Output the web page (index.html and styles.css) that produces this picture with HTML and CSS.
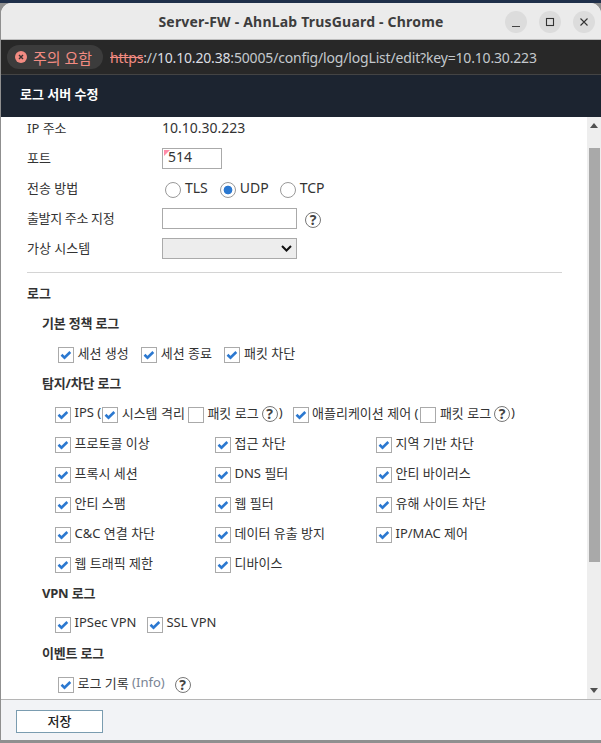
FILE: index.html
```html
<!DOCTYPE html>
<html lang="ko">
<head>
<meta charset="utf-8">
<title>Server-FW - AhnLab TrusGuard - Chrome</title>
<link rel="stylesheet" href="styles.css">
</head>
<body>
<svg class="defs" width="0" height="0" aria-hidden="true">
  <symbol id="tick" viewBox="0 0 14 14"><path d="M2.500 6.800l3 2.900 5.800-5.700" fill="none" stroke="#2b78d0" stroke-width="2.600"/></symbol>
</svg>
<div class="window">
  <div class="titlebar">
    <span class="title">Server-FW - AhnLab TrusGuard - Chrome</span>
    <div class="winbtns">
      <span class="winbtn"><svg width="22" height="22" viewBox="0 0 22 22"><path d="M7 15.500h8" stroke="#444" stroke-width="1.200"/></svg></span>
      <span class="winbtn"><svg width="22" height="22" viewBox="0 0 22 22"><rect x="7.500" y="7.500" width="7" height="7" fill="none" stroke="#333" stroke-width="1.100"/></svg></span>
      <span class="winbtn"><svg width="22" height="22" viewBox="0 0 22 22"><path d="M7.500 7.500l7 7M14.500 7.500l-7 7" stroke="#333" stroke-width="1.100"/></svg></span>
    </div>
  </div>
  <div class="addressbar">
    <span class="chip">
      <svg width="12" height="12" viewBox="0 0 12 12"><circle cx="6" cy="6" r="6" fill="#f28b82"/><path d="M4 4l4 4M8 4l-4 4" stroke="#3a3030" stroke-width="1.400"/></svg>
      <span>주의 요함</span>
    </span>
    <span class="url"><s class="https">https</s><span class="dim">://</span>10.10.20.38<span class="dim">:50005/config/log/logList/edit?key=10.10.30.223</span></span>
  </div>
  <div class="header">로그 서버 수정</div>
  <div class="middle">
    <div class="content">
      <div class="scrolled">
        <div class="row form"><span class="lab">IP 주소</span><span class="value">10.10.30.223</span></div>
        <div class="row form"><span class="lab">포트</span><span class="input small">514</span></div>
        <div class="row form"><span class="lab">전송 방법</span>
          <span class="radios">
            <span class="opt"><i class="radio"></i>TLS</span>
            <span class="opt"><i class="radio on"></i>UDP</span>
            <span class="opt"><i class="radio"></i>TCP</span>
          </span>
        </div>
        <div class="row form"><span class="lab condensed">출발지 주소 지정</span><span class="input wide"></span><span class="help spaced">?</span></div>
        <div class="row form"><span class="lab">가상 시스템</span>
          <span class="select"><svg width="11" height="7" viewBox="0 0 11 7"><path d="M1 1l4.500 4.500L10 1" fill="none" stroke="#111" stroke-width="2"/></svg></span>
        </div>
        <hr class="divider">
        <div class="row h1">로그</div>
        <div class="row h2">기본 정책 로그</div>
        <div class="row checks c1">
          <label class="cb"><span class="box"><svg><use href="#tick"/></svg></span>세션 생성</label>
          <label class="cb"><span class="box"><svg><use href="#tick"/></svg></span>세션 종료</label>
          <label class="cb"><span class="box"><svg><use href="#tick"/></svg></span>패킷 차단</label>
        </div>
        <div class="row h2">탐지/차단 로그</div>
        <div class="row checks c2 tight">
          <label class="cb ips"><span class="box"><svg><use href="#tick"/></svg></span>IPS (</label>
          <label class="cb"><span class="box"><svg><use href="#tick"/></svg></span>시스템 격리</label>
          <label class="cb"><span class="box"></span>패킷 로그</label><span class="help inline">?</span><span class="paren">)</span>
          <label class="cb gap"><span class="box"><svg><use href="#tick"/></svg></span>애플리케이션 제어 (</label>
          <label class="cb"><span class="box"></span>패킷 로그</label><span class="help inline">?</span><span class="paren">)</span>
        </div>
        <div class="grid3">
          <label class="cb"><span class="box"><svg><use href="#tick"/></svg></span>프로토콜 이상</label>
          <label class="cb"><span class="box"><svg><use href="#tick"/></svg></span>접근 차단</label>
          <label class="cb"><span class="box"><svg><use href="#tick"/></svg></span>지역 기반 차단</label>
          <label class="cb"><span class="box"><svg><use href="#tick"/></svg></span>프록시 세션</label>
          <label class="cb"><span class="box"><svg><use href="#tick"/></svg></span>DNS 필터</label>
          <label class="cb"><span class="box"><svg><use href="#tick"/></svg></span>안티 바이러스</label>
          <label class="cb"><span class="box"><svg><use href="#tick"/></svg></span>안티 스팸</label>
          <label class="cb"><span class="box"><svg><use href="#tick"/></svg></span>웹 필터</label>
          <label class="cb"><span class="box"><svg><use href="#tick"/></svg></span>유해 사이트 차단</label>
          <label class="cb"><span class="box"><svg><use href="#tick"/></svg></span>C&amp;C 연결 차단</label>
          <label class="cb"><span class="box"><svg><use href="#tick"/></svg></span>데이터 유출 방지</label>
          <label class="cb"><span class="box"><svg><use href="#tick"/></svg></span>IP/MAC 제어</label>
          <label class="cb"><span class="box"><svg><use href="#tick"/></svg></span>웹 트래픽 제한</label>
          <label class="cb"><span class="box"><svg><use href="#tick"/></svg></span>디바이스</label>
        </div>
        <div class="row h2">VPN 로그</div>
        <div class="row checks c2 vpn">
          <label class="cb"><span class="box"><svg><use href="#tick"/></svg></span>IPSec VPN</label>
          <label class="cb"><span class="box"><svg><use href="#tick"/></svg></span>SSL VPN</label>
        </div>
        <div class="row h2">이벤트 로그</div>
        <div class="row checks c1 event">
          <label class="cb"><span class="box"><svg><use href="#tick"/></svg></span>로그 기록 <span class="muted">(Info)</span></label>
          <span class="help">?</span>
        </div>
      </div>
    </div>
    <div class="scrollbar">
      <svg class="arrow" width="8" height="5" viewBox="0 0 8 5"><path d="M4 0L8 5H0z" fill="#505050"/></svg>
      <div class="track"><div class="thumb"></div></div>
      <svg class="arrow" width="8" height="5" viewBox="0 0 8 5"><path d="M4 5L8 0H0z" fill="#505050"/></svg>
    </div>
  </div>
  <div class="footer"><button class="save" type="button">저장</button></div>
</div>
</body>
</html>
```
FILE: styles.css
```css
* { box-sizing: border-box; }
html, body { margin: 0; height: 100%; }
body {
  width: 601px; height: 743px; overflow: hidden;
  background: linear-gradient(#1f2f4a 3px, #8f8f8f 3px);
  padding: 3px 0 3px 1px;
  font-family: "Noto Sans", "Noto Sans CJK KR", sans-serif;
  font-size: 13px; color: #333;
}
.defs { position: absolute; }
.window {
  width: 600px; height: 737px;
  display: flex; flex-direction: column;
  border-radius: 11px 11px 0 0;
  overflow: hidden;
  background: #fff;
}
.titlebar {
  height: 37px; flex: none;
  background: #ebebeb;
  border-bottom: 1px solid #bdbdbd;
  display: flex; align-items: center; justify-content: center;
  position: relative;
}
.title { font-family: "Noto Sans", sans-serif; font-weight: 700; font-size: 14px; letter-spacing: 0.2px; color: #3d3d3d; }
.winbtns { position: absolute; right: 6px; top: 8px; display: flex; gap: 12px; }
.winbtn { width: 22px; height: 22px; border-radius: 50%; background: #dcdcdc; display: flex; align-items: center; justify-content: center; }
.addressbar {
  height: 35px; flex: none;
  background: #282828;
  border-bottom: 1px solid #444;
  display: flex; align-items: center;
  padding-left: 6px; gap: 7px;
}
.chip {
  height: 24px; width: 96px; flex: none;
  background: #3c3c3c; border-radius: 12px;
  display: flex; align-items: center; gap: 6px;
  padding-left: 8px;
  color: #f28b82; font-size: 15px;
}
.url { font-size: 14px; letter-spacing: -0.17px; color: #dcdee2; white-space: nowrap; }
.https { color: #f28b82; }
.dim { color: #c4c8cd; }
.header {
  height: 42px; flex: none;
  background: #1c2430;
  color: #fff; font-weight: 700; font-size: 13px;
  display: flex; align-items: center;
  padding: 0 0 6px 19px;
}
.middle { flex: 1; min-height: 0; display: flex; }
.content { flex: 1; min-width: 0; overflow: hidden; }
.scrolled { margin-top: -5px; padding: 0 25px 0 26px; }
.row { height: 30px; display: flex; align-items: center; }
.lab { width: 135px; flex: none; }
.condensed { letter-spacing: -0.35px; }
.value { font-size: 14px; }
.input { display: block; height: 21px; margin-top: 3px; background: #fff; border: 1px solid #aaa; padding-left: 5px; line-height: 16px; position: relative; }
.small { width: 60px; font-size: 14px; }
.small::before { content: ""; position: absolute; left: 1px; top: 1px; border-top: 6px solid #ff8ba8; border-right: 6px solid transparent; }
.wide { width: 135px; }
.select { width: 135px; height: 21px; margin-top: 3px; background: #ededed; border: 1px solid #aaa; display: flex; align-items: center; justify-content: flex-end; padding-right: 4px; }
.radios { display: flex; padding-left: 3px; font-size: 14px; }
.opt { display: flex; align-items: center; gap: 4px; margin-right: 12px; }
.opt:nth-child(2) { margin-right: 11px; }
.radio { width: 16px; height: 16px; margin-top: 6px; border: 1px solid #999; border-radius: 50%; background: #fff; display: block; }
.radio.on { background: radial-gradient(circle, #2b78d0 0 4px, #fff 4.700px); }
.help {
  width: 16px; height: 16px; flex: none;
  margin-top: 6px;
  border: 1.500px solid #777; border-radius: 50%;
  display: inline-flex; align-items: center; justify-content: center;
  font-size: 14px; font-weight: 700; color: #444; line-height: 1;
}
.help.inline { margin-top: 4px; }
.help.spaced { margin-left: 8px; }
.divider { margin: 10px 0 4px; border: 0; border-top: 1px solid #d4d4d4; height: 1px; width: 535px; }
.h1 { font-weight: 700; }
.h2 { font-weight: 700; padding-left: 15px; letter-spacing: -0.2px; }
.checks { gap: 12.500px; }
.c1 { padding-left: 31px; }
.c2 { padding-left: 28px; }
.tight { gap: 3px; }
.vpn { gap: 10.500px; }
.event { gap: 10px; }
.cb { display: inline-flex; align-items: center; gap: 3.500px; white-space: pre; }
.ips { margin-right: -2px; }
.gap { margin: 0 -1px 0 7px; }
.box { width: 16px; height: 16px; margin-top: 6px; flex: none; background: #fff; border: 1px solid #aaa; display: block; }
.box svg { display: block; width: 14px; height: 14px; }
.paren { margin-left: -2px; }
.muted { color: #7a8494; margin-left: -3.500px; }
.grid3 { display: grid; grid-template-columns: 160px 161px 1fr; grid-auto-rows: 30px; align-items: center; padding-left: 28px; }
.scrollbar { width: 14px; flex: none; background: #eee; display: flex; flex-direction: column; align-items: center; padding-top: 6px; padding-bottom: 6px; }
.arrow { flex: none; }
.track { flex: 1; width: 100%; padding: 20px 1px 0 2px; min-height: 0; }
.thumb { height: 414px; background: #a9a9a9; }
.footer { height: 41px; flex: none; background: #f2f3f6; border-top: 1px solid #b5b5b5; padding: 10px 0 0 15px; }
.save { display: block; width: 87px; height: 23px; background: #fff; border: 1px solid #7a9cb0; padding: 0 0 3px; font: inherit; font-weight: 500; color: #222; }
```
